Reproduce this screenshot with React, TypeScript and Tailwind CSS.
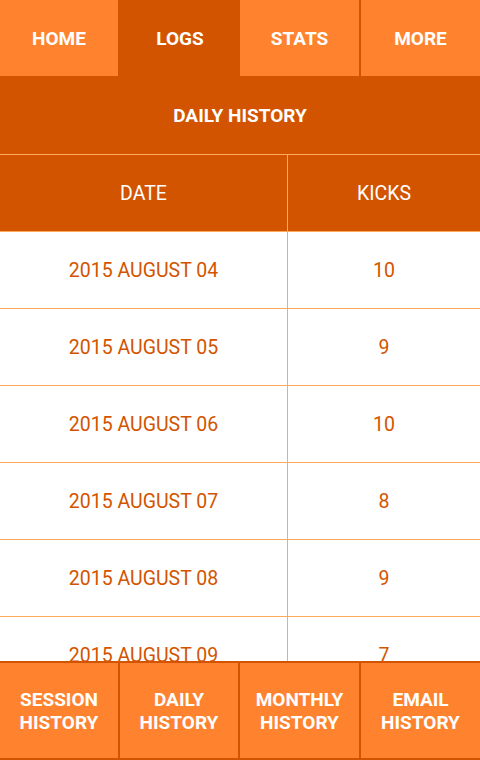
import React from "react";

const rows = [
  ["2015 AUGUST 04", "10"],
  ["2015 AUGUST 05", "9"],
  ["2015 AUGUST 06", "10"],
  ["2015 AUGUST 07", "8"],
  ["2015 AUGUST 08", "9"],
  ["2015 AUGUST 09", "7"],
  ["2015 AUGUST 10", "9"],
];

export default function App() {
  return (
    <div
      className="w-[480px] h-[760px] overflow-hidden flex flex-col bg-white"
      style={{ fontFamily: "Roboto, 'Noto Sans', sans-serif" }}
    >
      {/* top tabs */}
      <div className="h-[76px] shrink-0 bg-[#d35400] grid grid-cols-[118px_2px_120px_119px_2px_119px] text-white font-bold text-[19px]">
        <div className="bg-[#ff832e] flex items-center justify-center pt-[2px]">HOME</div>
        <div />
        <div className="bg-[#d35400] flex items-center justify-center pt-[2px]">LOGS</div>
        <div className="bg-[#ff832e] flex items-center justify-center pt-[2px]">STATS</div>
        <div />
        <div className="bg-[#ff832e] flex items-center justify-center pt-[2px]">MORE</div>
      </div>
      {/* section header */}
      <div className="h-[78px] shrink-0 bg-[#d35400] flex items-center justify-center pt-[3px] text-white font-bold text-[19px]">
        DAILY HISTORY
      </div>
      {/* table */}
      <div className="flex-1 min-h-0 overflow-hidden border-t border-[#ffaa5a]">
        <div className="h-[77px] grid grid-cols-[288px_1fr] bg-[#d35400] text-white text-[19.5px] border-b border-[#ffaa5a]">
          <div className="flex items-center justify-center pt-[2px] border-r border-[#ffaa5a]">DATE</div>
          <div className="flex items-center justify-center pt-[2px]">KICKS</div>
        </div>
        {rows.map(([d, k]) => (
          <div
            key={d}
            className="h-[77px] grid grid-cols-[288px_1fr] text-[#d35400] text-[19.5px] border-b border-[#ffaa5a]"
          >
            <div className="flex items-center justify-center pt-[2px] border-r border-[#ffaa5a]">{d}</div>
            <div className="flex items-center justify-center pt-[2px]">{k}</div>
          </div>
        ))}
      </div>
      {/* bottom bar */}
      <div className="h-[99px] shrink-0 bg-[#d35400] pt-[2px] pb-[2px] grid grid-cols-[118px_2px_118px_2px_119px_2px_119px] text-white font-bold text-[19px] leading-[23px] text-center">
        <div className="bg-[#ff832e] flex items-center justify-center pt-[1px]">SESSION<br />HISTORY</div>
        <div />
        <div className="bg-[#ff832e] flex items-center justify-center pt-[1px]">DAILY<br />HISTORY</div>
        <div />
        <div className="bg-[#ff832e] flex items-center justify-center pt-[1px]">MONTHLY<br />HISTORY</div>
        <div />
        <div className="bg-[#ff832e] flex items-center justify-center pt-[1px]">EMAIL<br />HISTORY</div>
      </div>
    </div>
  );
}
